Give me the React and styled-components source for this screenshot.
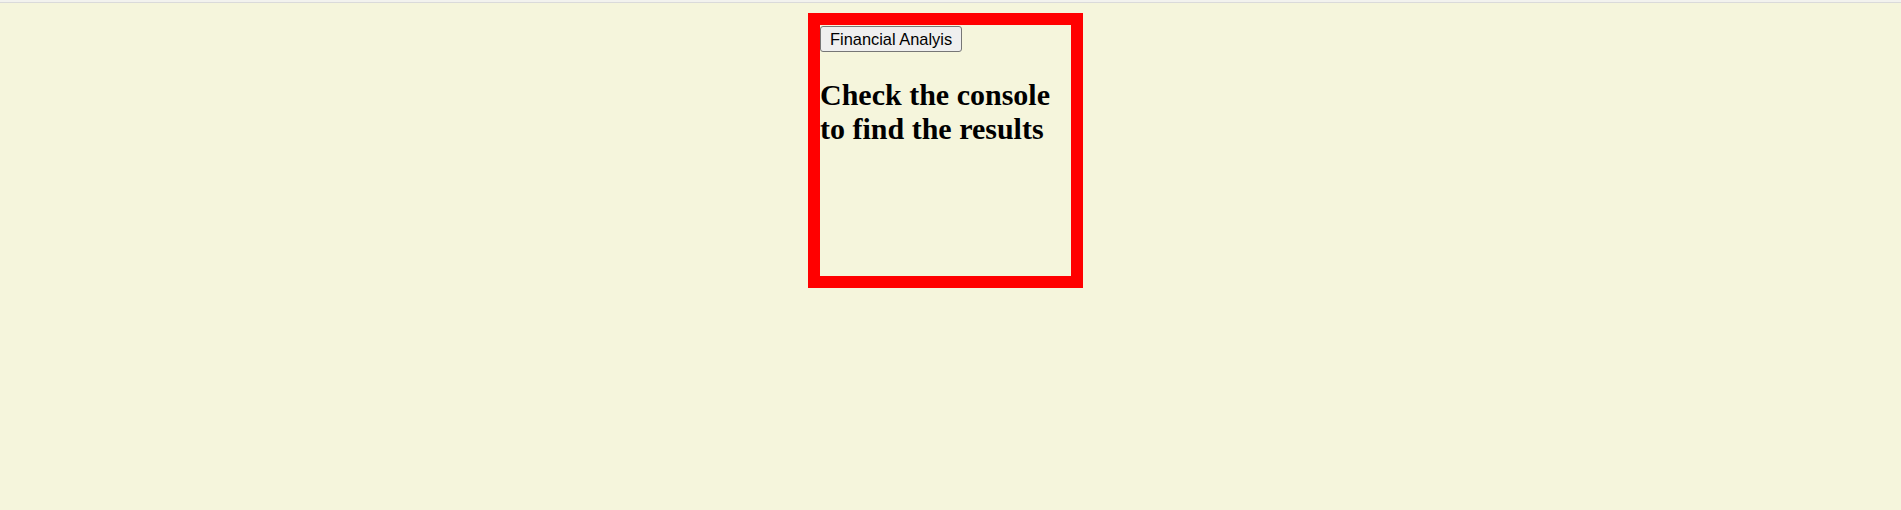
import React from 'react';
import styled, { createGlobalStyle } from 'styled-components';

const GlobalStyle = createGlobalStyle`
	html,
	body {
		margin: 0;
		padding: 0;
		background: #f5f5dc;
	}
	body {
		font-family: 'Liberation Serif', 'Times New Roman', serif;
	}
`;

const Chrome = styled.div`
	height: 2px;
	background: #f2f2ee;
	border-bottom: 1px solid #dadada;
`;

const Page = styled.main`
	display: flex;
	justify-content: center;
	padding: 10px 20px 10px 10px;
	min-height: 487px;
	box-sizing: border-box;
`;

const Panel = styled.section`
	width: 251px;
	height: 251px;
	border: 12px solid #ff0000;
	flex-shrink: 0;
`;

const AnalysisButton = styled.button`
	display: block;
	margin: 1px 0 0;
	padding: 3px 9px 2px;
	font-family: 'Liberation Sans', Arial, sans-serif;
	font-size: 16.4px;
	line-height: 19px;
	color: #000;
	background: #efefef;
	border: 1px solid #767676;
	border-radius: 3px;
	cursor: pointer;
`;

const Message = styled.h2`
	margin: 26px 0;
	font-family: 'Liberation Serif', 'Times New Roman', serif;
	font-size: 30px;
	font-weight: bold;
	line-height: 34px;
	color: #000;
`;

export default function App() {
	function runAnalysis() {
		console.log('Financial Analysis');
	}

	return (
		<>
			<GlobalStyle />
			<Chrome />
			<Page>
				<Panel>
					<AnalysisButton onClick={runAnalysis}>Financial Analyis</AnalysisButton>
					<Message>Check the console to find the results</Message>
				</Panel>
			</Page>
		</>
	);
}
